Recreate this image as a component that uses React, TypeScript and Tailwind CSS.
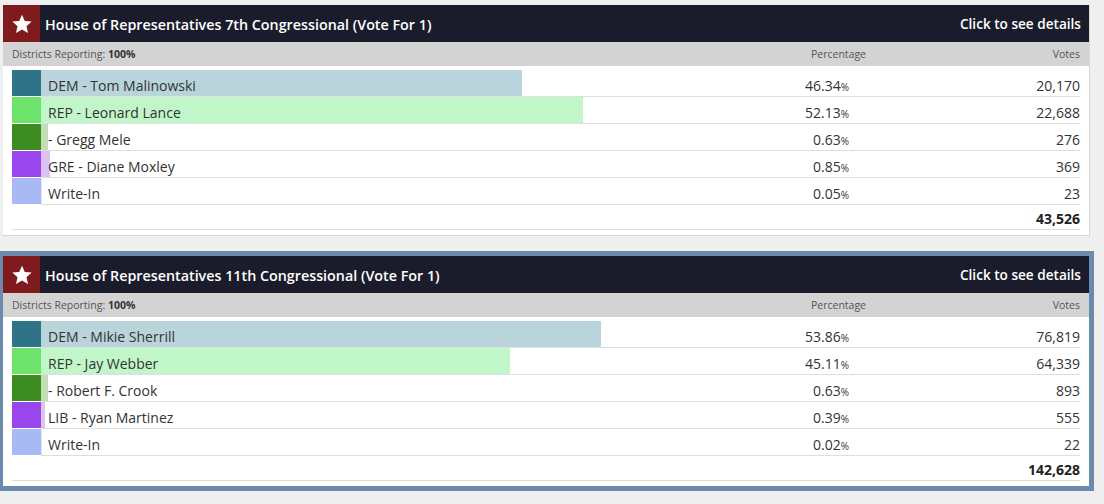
import React from "react";

type Candidate = { name: string; swatch: string; bar: string; pct: number; votes: string };
type Race = { title: string; total: string; candidates: Candidate[]; active?: boolean };

const RACES: Race[] = [
  {
    title: "House of Representatives 7th Congressional (Vote For 1)",
    total: "43,526",
    candidates: [
      { name: "DEM - Tom Malinowski", swatch: "#2e7386", bar: "#b9d4db", pct: 46.34, votes: "20,170" },
      { name: "REP - Leonard Lance", swatch: "#6ee36b", bar: "#c1f6c8", pct: 52.13, votes: "22,688" },
      { name: "- Gregg Mele", swatch: "#3d8c22", bar: "#c2dcb5", pct: 0.63, votes: "276" },
      { name: "GRE - Diane Moxley", swatch: "#9a46ee", bar: "#dec3f2", pct: 0.85, votes: "369" },
      { name: "Write-In", swatch: "#a9b9f3", bar: "#dfe5fb", pct: 0.05, votes: "23" },
    ],
  },
  {
    title: "House of Representatives 11th Congressional (Vote For 1)",
    total: "142,628",
    active: true,
    candidates: [
      { name: "DEM - Mikie Sherrill", swatch: "#2e7386", bar: "#b9d4db", pct: 53.86, votes: "76,819" },
      { name: "REP - Jay Webber", swatch: "#6ee36b", bar: "#c1f6c8", pct: 45.11, votes: "64,339" },
      { name: "- Robert F. Crook", swatch: "#3d8c22", bar: "#c2dcb5", pct: 0.63, votes: "893" },
      { name: "LIB - Ryan Martinez", swatch: "#9a46ee", bar: "#dec3f2", pct: 0.39, votes: "555" },
      { name: "Write-In", swatch: "#a9b9f3", bar: "#dfe5fb", pct: 0.02, votes: "22" },
    ],
  },
];

function Star() {
  return (
    <svg width="22" height="22" viewBox="0 0 24 24" aria-hidden>
      <path
        fill="#fff"
        d="M12 1.8l3.05 6.9 7.5.7-5.67 4.98 1.68 7.36L12 17.9l-6.56 3.84 1.68-7.36L1.45 9.4l7.5-.7z"
      />
    </svg>
  );
}

function RaceCard({ race }: { race: Race }) {
  const card = (
    <div className="flex w-[1086px] flex-col bg-white pb-[5px]">
      <div className="flex h-[37px] items-center bg-[#1b1c2b] text-white">
        <div className="flex h-full w-[37px] items-center justify-center bg-[#7f1b1c]">
          <Star />
        </div>
        <div className="ml-[5px] flex-1 pt-[2px] text-[14.3px] font-semibold">{race.title}</div>
        <div className="mr-[8px] pt-[2px] text-[13.6px] font-semibold">Click to see details</div>
      </div>
      <div className="flex h-[24px] items-center bg-[#d3d3d3] px-[9px] pt-px text-[10.5px] text-[#555]">
        <div className="flex-1">
          Districts Reporting: <span className="font-bold text-[#333]">100%</span>
        </div>
        <div className="text-right">Percentage</div>
        <div className="w-[214px] text-right">Votes</div>
      </div>
      <div className="mt-[4px] flex flex-col px-[9px]">
        {race.candidates.map((c) => (
          <div key={c.name} className="flex h-[27px]">
            <div className="mb-px w-[29px] shrink-0" style={{ backgroundColor: c.swatch }} />
            <div className="relative flex flex-1 items-center border-b border-[#dedede] pt-[4px] text-[14px] text-[#333]">
              <div className="absolute inset-y-0 left-0" style={{ width: `${c.pct}%`, backgroundColor: c.bar }} />
              <div className="relative flex-1 pl-[7px]">{c.name}</div>
              <div className="relative text-right">
                {c.pct.toFixed(2)}
                <span className="text-[10px]">%</span>
              </div>
              <div className="relative w-[231px] text-right">{c.votes}</div>
            </div>
          </div>
        ))}
        <div className="flex h-[25px] items-center justify-end border-b border-[#dedede] pt-[3px] text-[14px] font-bold text-[#222]">
          {race.total}
        </div>
      </div>
    </div>
  );

  if (race.active) {
    return (
      <div className="w-fit border-t-[5px] border-r-[5px] border-b-[5px] border-l-[3px] border-[#6b8bad]">{card}</div>
    );
  }
  return <div className="ml-[3px] w-fit border-r border-b border-[#d6d6d6]">{card}</div>;
}

export default function App() {
  return (
    <div className="flex h-[504px] w-[1104px] flex-col gap-[15px] bg-[#efefef] pt-[5px] font-['Open_Sans',sans-serif]">
      {RACES.map((race) => (
        <RaceCard key={race.title} race={race} />
      ))}
    </div>
  );
}
